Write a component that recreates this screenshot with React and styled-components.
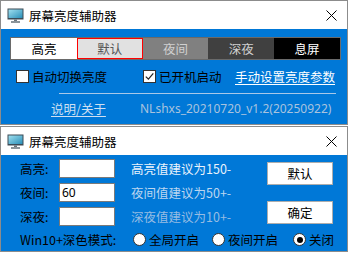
import React from 'react'
import styled, { createGlobalStyle } from 'styled-components'

const GlobalStyle = createGlobalStyle`
  html, body {
    margin: 0;
    padding: 0;
    background: #ffffff;
  }
  body {
    font-family: "Noto Sans", "Noto Sans CJK SC", sans-serif;
    font-size: 12px;
    color: #000;
  }
`

const MonitorIcon = () => (
  <svg width="17" height="15" viewBox="0 0 17 15">
    <defs>
      <linearGradient id="scr" x1="0" y1="0" x2="1" y2="1">
        <stop offset="0" stopColor="#9fe0f0" />
        <stop offset="1" stopColor="#2a8fb8" />
      </linearGradient>
    </defs>
    <rect x="0.5" y="0.5" width="16" height="11" fill="#3c4a55" />
    <rect x="1.5" y="1.5" width="14" height="8.5" fill="url(#scr)" />
    <rect x="7" y="11.5" width="3" height="1.5" fill="#6b767e" />
    <rect x="4" y="13" width="9" height="2" fill="#8a949a" />
  </svg>
)

const CloseIcon = () => (
  <svg width="11" height="11" viewBox="0 0 11 11">
    <path d="M0.5 0.5 L10.5 10.5 M10.5 0.5 L0.5 10.5" stroke="#000" strokeWidth="1" />
  </svg>
)

const Window = styled.div`
  width: 346px;
  border: 1px solid #8c8c8c;
  background: #0078d7;
  & + & {
    margin-top: 1px;
  }
`

const TitleBar = styled.div`
  height: 28px;
  background: #fff;
  display: flex;
  align-items: center;
  padding: 0 10px 0 6px;
  gap: 5px;
`

const TitleText = styled.span`
  flex: 1;
  font-family: "Noto Sans CJK SC", sans-serif;
  font-size: 12.5px;
  color: #000;
`

const Body = styled.div`
  height: ${p => p.$h}px;
  display: flex;
  flex-direction: column;
`

const Tabs = styled.div`
  margin: 8px 6px 0 9px;
  height: 21px;
  display: flex;
  border: 1px solid #6a6a6a;
`

const Tab = styled.div`
  flex: 1;
  display: flex;
  align-items: center;
  justify-content: center;
  font-family: "Noto Sans CJK SC", sans-serif;
  font-size: 12.5px;
  background: ${p => p.$bg};
  color: ${p => p.$fg};
  box-shadow: ${p => (p.$active ? 'inset 0 0 0 1px #ff0000' : 'none')};
`

const Row = styled.div`
  display: flex;
  align-items: center;
  height: 20px;
  margin-top: ${p => p.$mt || 0}px;
  padding-left: ${p => p.$pl || 0}px;
`

const CheckItem = styled.label`
  display: flex;
  align-items: center;
  gap: 3px;
  width: ${p => p.$w}px;
  font-family: "Noto Sans CJK SC", sans-serif;
  font-size: 12.5px;
`

const Box = styled.span`
  width: 11px;
  height: 11px;
  border: 1px solid #333;
  background: #fff;
  display: inline-flex;
  align-items: center;
  justify-content: center;
`

const Link = styled.span`
  font-family: "Noto Sans CJK SC", sans-serif;
  font-size: 12.5px;
  color: ${p => p.$c};
  text-decoration: underline;
  text-underline-offset: 2px;
  width: ${p => (p.$w ? `${p.$w}px` : 'auto')};
`

const Separator = styled.div`
  margin: 7px 11px 0 58px;
  height: 1px;
  background: #a9c8e8;
`

const Version = styled.span`
  font-family: "Noto Sans", sans-serif;
  font-size: 12px;
  color: #a9c3de;
`

const Main = styled.div`
  display: flex;
  padding: 1px 0 0 19px;
`

const Fields = styled.div`
  display: grid;
  grid-template-columns: 39px 56px 152px;
  grid-auto-rows: 24px;
  align-items: center;
`

const Label = styled.span`
  width: ${p => (p.$w ? `${p.$w}px` : 'auto')};
  font-family: "Noto Sans CJK SC", sans-serif;
  font-size: 12.5px;
  color: #000;
`

const Input = styled.div`
  height: 17px;
  border: 1px solid #7a7a7a;
  background: #fff;
  font-size: 12px;
  line-height: 17px;
  padding-left: 2px;
  font-family: "Noto Sans", sans-serif;
`

const Hint = styled.span`
  padding-left: 16px;
  font-family: "Noto Sans CJK SC", "Noto Sans", sans-serif;
  font-size: 12.5px;
  color: ${p => p.$c};
  white-space: nowrap;
`

const Buttons = styled.div`
  display: flex;
  flex-direction: column;
  gap: 16px;
  padding-top: 6px;
`

const Button = styled.div`
  width: 64px;
  height: 21px;
  border: 1px solid #adadad;
  background: #fff;
  display: flex;
  align-items: center;
  justify-content: center;
  font-family: "Noto Sans CJK SC", sans-serif;
  font-size: 12.5px;
`

const RadioRow = styled.div`
  display: flex;
  align-items: center;
  height: 24px;
  padding-left: 19px;
`

const RadioItem = styled.label`
  display: flex;
  align-items: center;
  gap: 3px;
  width: ${p => p.$w}px;
  font-family: "Noto Sans CJK SC", sans-serif;
  font-size: 12.5px;
`

const Circle = styled.span`
  width: 11px;
  height: 11px;
  border: 1px solid #333;
  border-radius: 50%;
  background: #fff;
  display: inline-flex;
  align-items: center;
  justify-content: center;
  &::after {
    content: '';
    width: 6px;
    height: 6px;
    border-radius: 50%;
    background: ${p => (p.$on ? '#000' : 'transparent')};
  }
`

const tabs = [
  { t: '高亮', bg: '#ffffff', fg: '#000' },
  { t: '默认', bg: '#e1e1e1', fg: '#555', active: true },
  { t: '夜间', bg: '#808080', fg: '#d0d0d0' },
  { t: '深夜', bg: '#404040', fg: '#d0d0d0' },
  { t: '息屏', bg: '#000000', fg: '#fff' },
]

const fields = [
  { l: '高亮:', v: '', h: '高亮值建议为150-', c: '#eaf3fc' },
  { l: '夜间:', v: '60', h: '夜间值建议为50+-', c: '#bcd6f0' },
  { l: '深夜:', v: '', h: '深夜值建议为10+-', c: '#96bce3' },
]

const App = () => (
  <>
    <GlobalStyle />
    <Window>
      <TitleBar>
        <MonitorIcon />
        <TitleText>屏幕亮度辅助器</TitleText>
        <CloseIcon />
      </TitleBar>
      <Body $h={95}>
        <Tabs>
          {tabs.map(x => (
            <Tab key={x.t} $bg={x.bg} $fg={x.fg} $active={x.active}>
              {x.t}
            </Tab>
          ))}
        </Tabs>
        <Row $mt={6} $pl={15}>
          <CheckItem $w={127}>
            <Box />
            自动切换亮度
          </CheckItem>
          <CheckItem $w={92}>
            <Box>
              <svg width="9" height="9" viewBox="0 0 9 9">
                <path d="M0.8 4.6 L3.4 7.2 L8.3 1.3" fill="none" stroke="#222" strokeWidth="1.2" />
              </svg>
            </Box>
            已开机启动
          </CheckItem>
          <Link $c="#fff">手动设置亮度参数</Link>
        </Row>
        <Separator />
        <Row $mt={4} $pl={50}>
          <Link $c="#cfe0f2" $w={89}>说明/关于</Link>
          <Version>NLshxs_20210720_v1.2(20250922)</Version>
        </Row>
      </Body>
    </Window>
    <Window>
      <TitleBar>
        <MonitorIcon />
        <TitleText>屏幕亮度辅助器</TitleText>
        <CloseIcon />
      </TitleBar>
      <Body $h={96}>
        <Main>
          <Fields>
            {fields.map(f => (
              <React.Fragment key={f.l}>
                <Label>{f.l}</Label>
                <Input>{f.v}</Input>
                <Hint $c={f.c}>{f.h}</Hint>
              </React.Fragment>
            ))}
          </Fields>
          <Buttons>
            <Button>默认</Button>
            <Button>确定</Button>
          </Buttons>
        </Main>
        <RadioRow>
          <Label $w={113}>Win10+深色模式:</Label>
          <RadioItem $w={79}>
            <Circle />
            全局开启
          </RadioItem>
          <RadioItem $w={81}>
            <Circle />
            夜间开启
          </RadioItem>
          <RadioItem $w={50}>
            <Circle $on />
            关闭
          </RadioItem>
        </RadioRow>
      </Body>
    </Window>
  </>
)

export default App
